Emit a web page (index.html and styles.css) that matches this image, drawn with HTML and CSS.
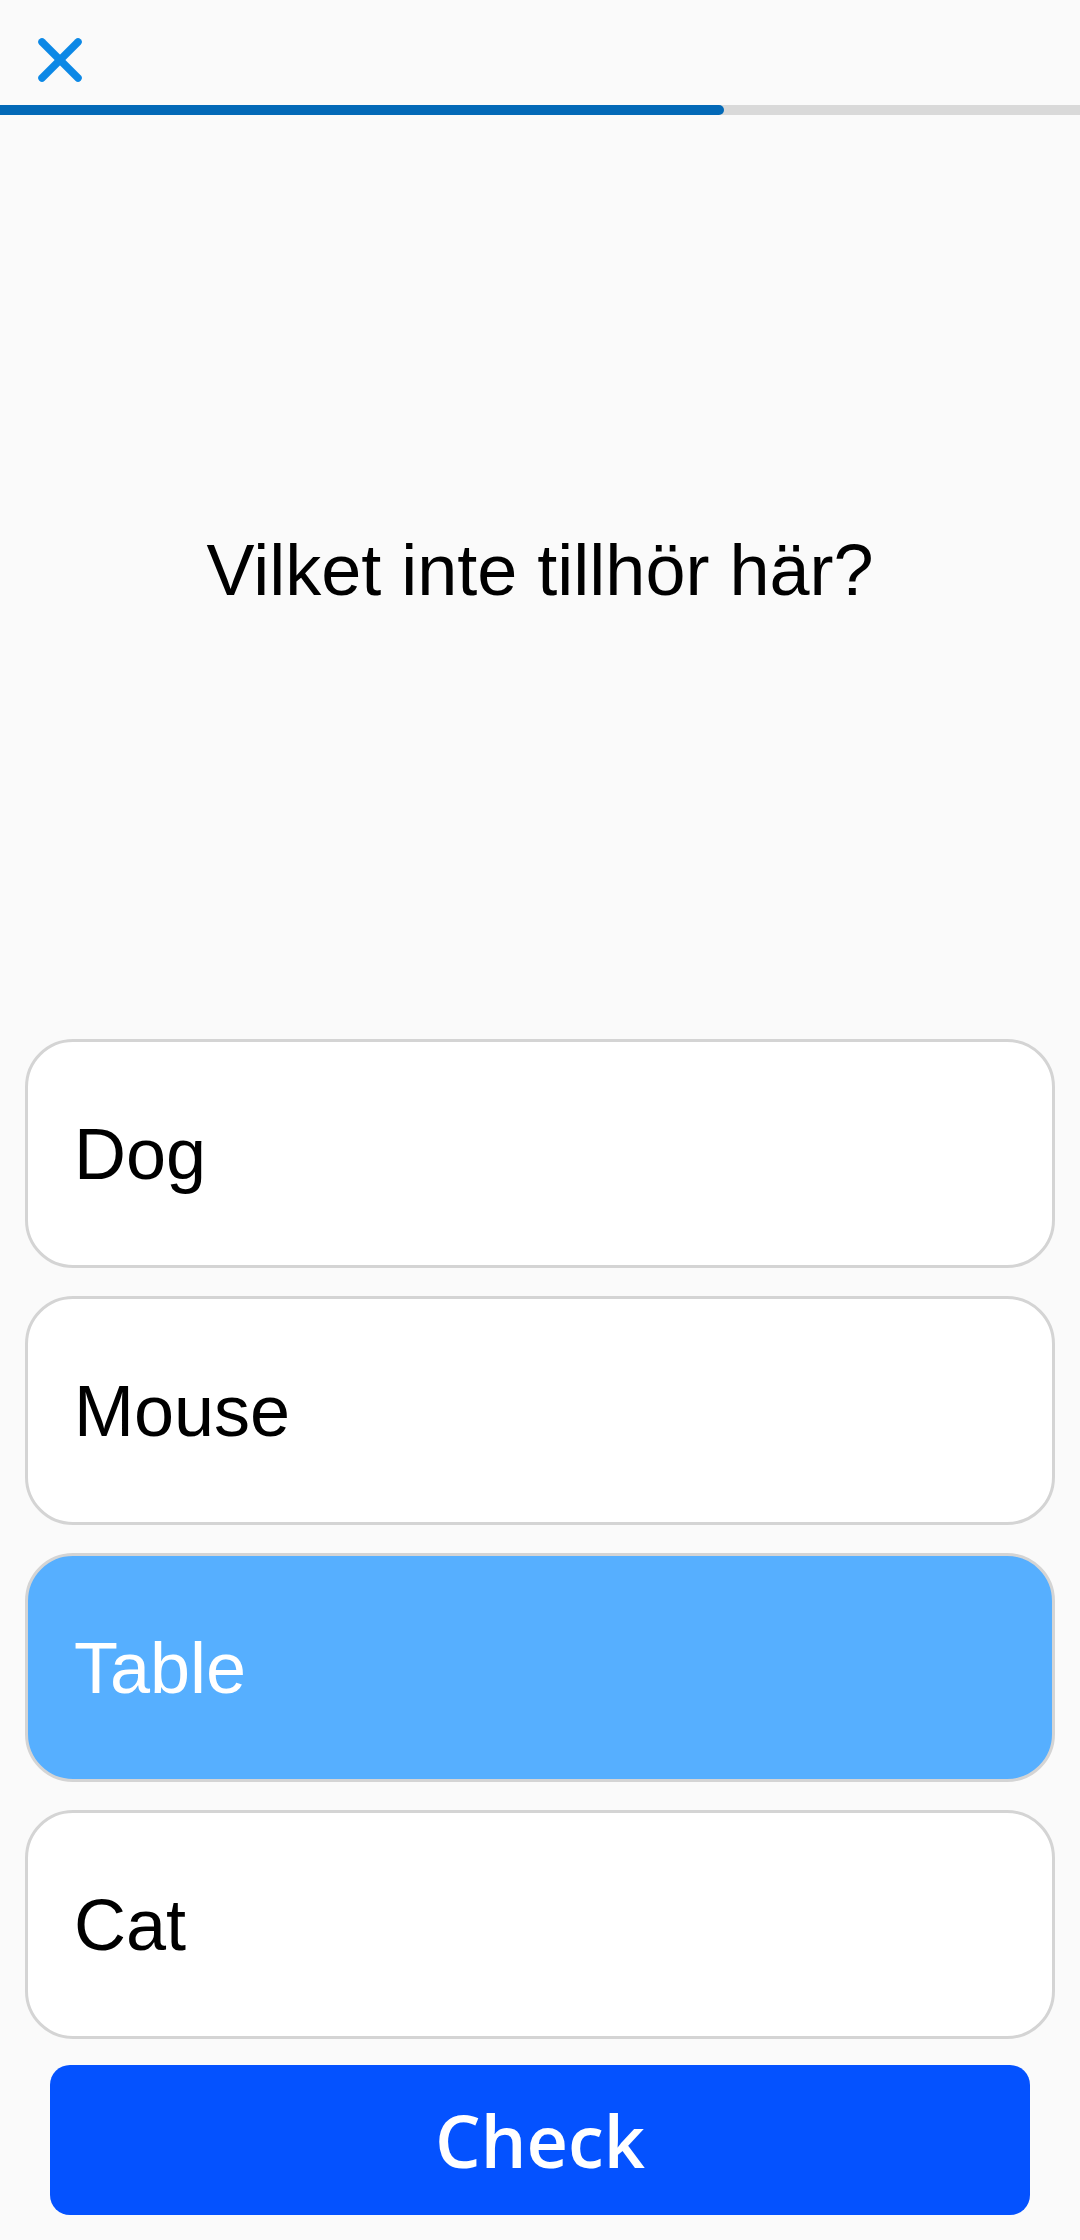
FILE: index.html
```html
<!DOCTYPE html>
<html lang="sv">
<head>
<meta charset="utf-8">
<title>Quiz</title>
<link rel="stylesheet" href="styles.css">
</head>
<body>
<div class="screen">
  <header class="topbar">
    <svg class="close-icon" width="44" height="44" viewBox="0 0 44 44" aria-label="Stäng">
      <line x1="4" y1="4" x2="40" y2="40"/>
      <line x1="40" y1="4" x2="4" y2="40"/>
    </svg>
  </header>
  <div class="progress"><div class="progress-fill" style="width:67%"></div></div>
  <main class="question">
    <p class="question-text">Vilket inte tillhör här?</p>
  </main>
  <section class="options">
    <div class="option">Dog</div>
    <div class="option">Mouse</div>
    <div class="option option-selected">Table</div>
    <div class="option">Cat</div>
  </section>
  <button class="check-btn">Check</button>
</div>
</body>
</html>
```

FILE: styles.css
```css
html, body {
  margin: 0;
  padding: 0;
}
body {
  background: #fafafa;
  font-family: "Liberation Sans", Arial, sans-serif;
}
.screen {
  width: 1080px;
  height: 2240px;
  display: flex;
  flex-direction: column;
  box-sizing: border-box;
}
.topbar {
  height: 105px;
  box-sizing: border-box;
  padding: 38px 0 0 38px;
  flex: none;
}
.close-icon {
  display: block;
}
.close-icon line {
  stroke: #0c88e6;
  stroke-width: 7.5;
  stroke-linecap: round;
}
.progress {
  height: 10px;
  background: #d9d9d9;
  flex: none;
}
.progress-fill {
  height: 100%;
  background: #0369b7;
  border-radius: 0 5px 5px 0;
}
.question {
  flex: 1;
  display: flex;
  align-items: center;
  justify-content: center;
  padding-bottom: 14px;
}
.question-text {
  margin: 0;
  font-size: 72px;
  color: #000;
}
.options {
  display: flex;
  flex-direction: column;
  gap: 28px;
  padding: 0 25px;
  flex: none;
}
.option {
  height: 229px;
  box-sizing: border-box;
  border: 3px solid #d4d4d4;
  border-radius: 48px;
  background: #ffffff;
  display: flex;
  align-items: center;
  padding-left: 46px;
  font-size: 72px;
  color: #000;
}
.option-selected {
  background: #56afff;
  color: #ffffff;
}
.check-btn {
  flex: none;
  margin: 26px 50px 25px;
  height: 150px;
  border: none;
  border-radius: 20px;
  background: #0452ff;
  color: #ffffff;
  font-family: "Open Sans", "Noto Sans", sans-serif;
  font-weight: 600;
  font-size: 72px;
  padding: 0;
}
```
